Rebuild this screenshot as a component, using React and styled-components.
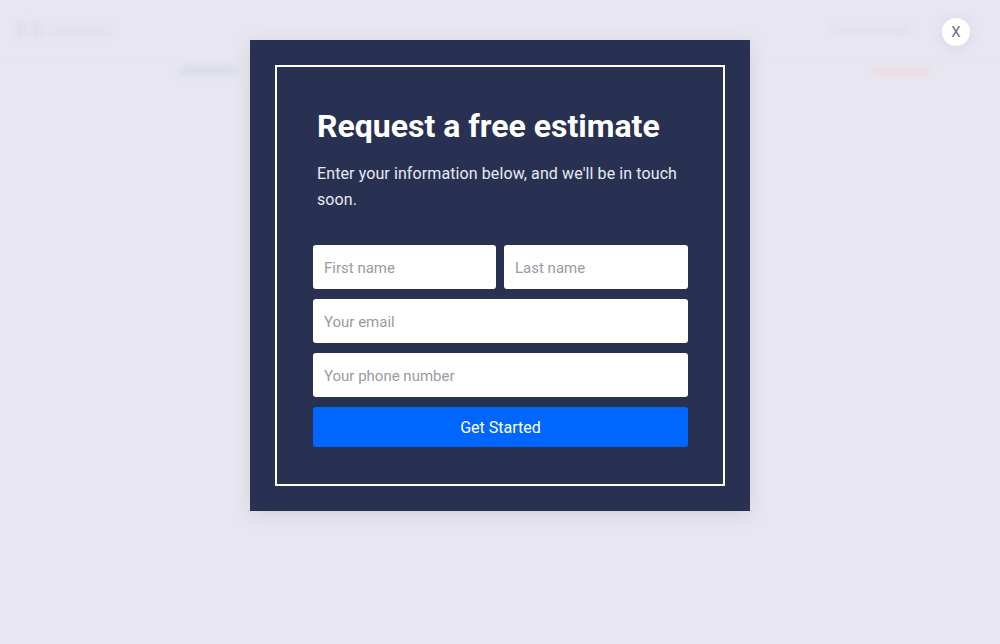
import React from 'react';
import styled, { createGlobalStyle } from 'styled-components';

const GlobalStyle = createGlobalStyle`
  html, body {
    margin: 0;
    padding: 0;
    background: #e8e7f1;
    font-family: Roboto, "Liberation Sans", Arial, sans-serif;
  }
  * { box-sizing: border-box; }
`;

const Page = styled.div`
  position: relative;
  width: 100%;
  height: 644px;
  overflow: hidden;
  background: #e8e7f1;
`;

/* blurred site behind the popup */
const Backdrop = styled.div`
  filter: blur(3px);
  opacity: 0.55;
`;

const SiteHeader = styled.header`
  display: flex;
  align-items: center;
  justify-content: space-between;
  height: 60px;
  padding: 0 90px 0 16px;
  border-bottom: 1px solid #e2e1ec;
`;

const Logo = styled.div`
  display: flex;
  align-items: center;
  gap: 6px;
`;

const LogoMark = styled.span`
  width: 10px;
  height: 18px;
  background: #d6d5e3;
  border-radius: 2px;
`;

const LogoText = styled.span`
  width: 64px;
  height: 12px;
  background: #dedde9;
  border-radius: 2px;
`;

const NavLink = styled.span`
  width: 80px;
  height: 10px;
  background: #dedde9;
  border-radius: 2px;
`;

const Tabs = styled.div`
  display: flex;
  justify-content: space-between;
  padding: 6px 70px 0 180px;
`;

const TabBar = styled.span`
  width: 58px;
  height: 10px;
  border-radius: 1px;
  background: ${({ $tone }) => $tone};
`;

const Overlay = styled.div`
  position: absolute;
  inset: 0;
  display: flex;
  justify-content: center;
  align-items: flex-start;
  padding-top: 40px;
`;

const Modal = styled.div`
  width: 500px;
  padding: 25px;
  background: #293152;
  box-shadow: 0 4px 18px rgba(40, 40, 80, 0.12);
`;

const Frame = styled.div`
  border: 2px solid #ffffff;
  padding: 40px 35px 37px 36px;
`;

const Title = styled.h2`
  margin: 0 0 0 4px;
  font-size: 32px;
  line-height: 38px;
  font-weight: 700;
  color: #ffffff;
`;

const Subtitle = styled.p`
  margin: 16px 0 32px 4px;
  font-size: 16px;
  line-height: 26px;
  letter-spacing: 0.1px;
  color: #e8eaf4;
`;

const Form = styled.form`
  display: flex;
  flex-direction: column;
  gap: 10px;
`;

const Row = styled.div`
  display: grid;
  grid-template-columns: 183fr 184fr;
  gap: 8px;
`;

const Input = styled.input`
  width: 100%;
  height: 44px;
  padding: 2px 11px 0;
  border: none;
  border-radius: 3px;
  background: #ffffff;
  font-family: Roboto, "Liberation Sans", Arial, sans-serif;
  font-size: 15px;
  color: #333;
  outline: none;

  &::placeholder {
    color: #9a9aa2;
  }
`;

const Submit = styled.button`
  height: 40px;
  border: none;
  border-radius: 3px;
  background: #0066ff;
  color: #ffffff;
  font-family: Roboto, "Liberation Sans", Arial, sans-serif;
  font-size: 16px;
  cursor: pointer;
`;

const CloseButton = styled.button`
  position: absolute;
  top: 18px;
  right: 30px;
  width: 28px;
  height: 28px;
  border: none;
  border-radius: 50%;
  background: #ffffff;
  color: #6e6e8c;
  font-family: Roboto, "Liberation Sans", Arial, sans-serif;
  font-size: 15px;
  line-height: 28px;
  padding: 0;
  box-shadow: 0 2px 14px rgba(80, 80, 120, 0.12);
  cursor: pointer;
`;

export default function App() {
  return (
    <Page>
      <GlobalStyle />
      <Backdrop>
        <SiteHeader>
          <Logo>
            <LogoMark />
            <LogoMark />
            <LogoText />
          </Logo>
          <NavLink />
        </SiteHeader>
        <Tabs>
          <TabBar $tone="#cfd4e2" />
          <TabBar $tone="#f0d9d4" />
        </Tabs>
      </Backdrop>

      <Overlay>
        <Modal>
          <Frame>
            <Title>Request a free estimate</Title>
            <Subtitle>Enter your information below, and we'll be in touch soon.</Subtitle>
            <Form onSubmit={(e) => e.preventDefault()}>
              <Row>
                <Input placeholder="First name" />
                <Input placeholder="Last name" />
              </Row>
              <Input placeholder="Your email" />
              <Input placeholder="Your phone number" />
              <Submit type="submit">Get Started</Submit>
            </Form>
          </Frame>
        </Modal>
      </Overlay>

      <CloseButton aria-label="Close">X</CloseButton>
    </Page>
  );
}
